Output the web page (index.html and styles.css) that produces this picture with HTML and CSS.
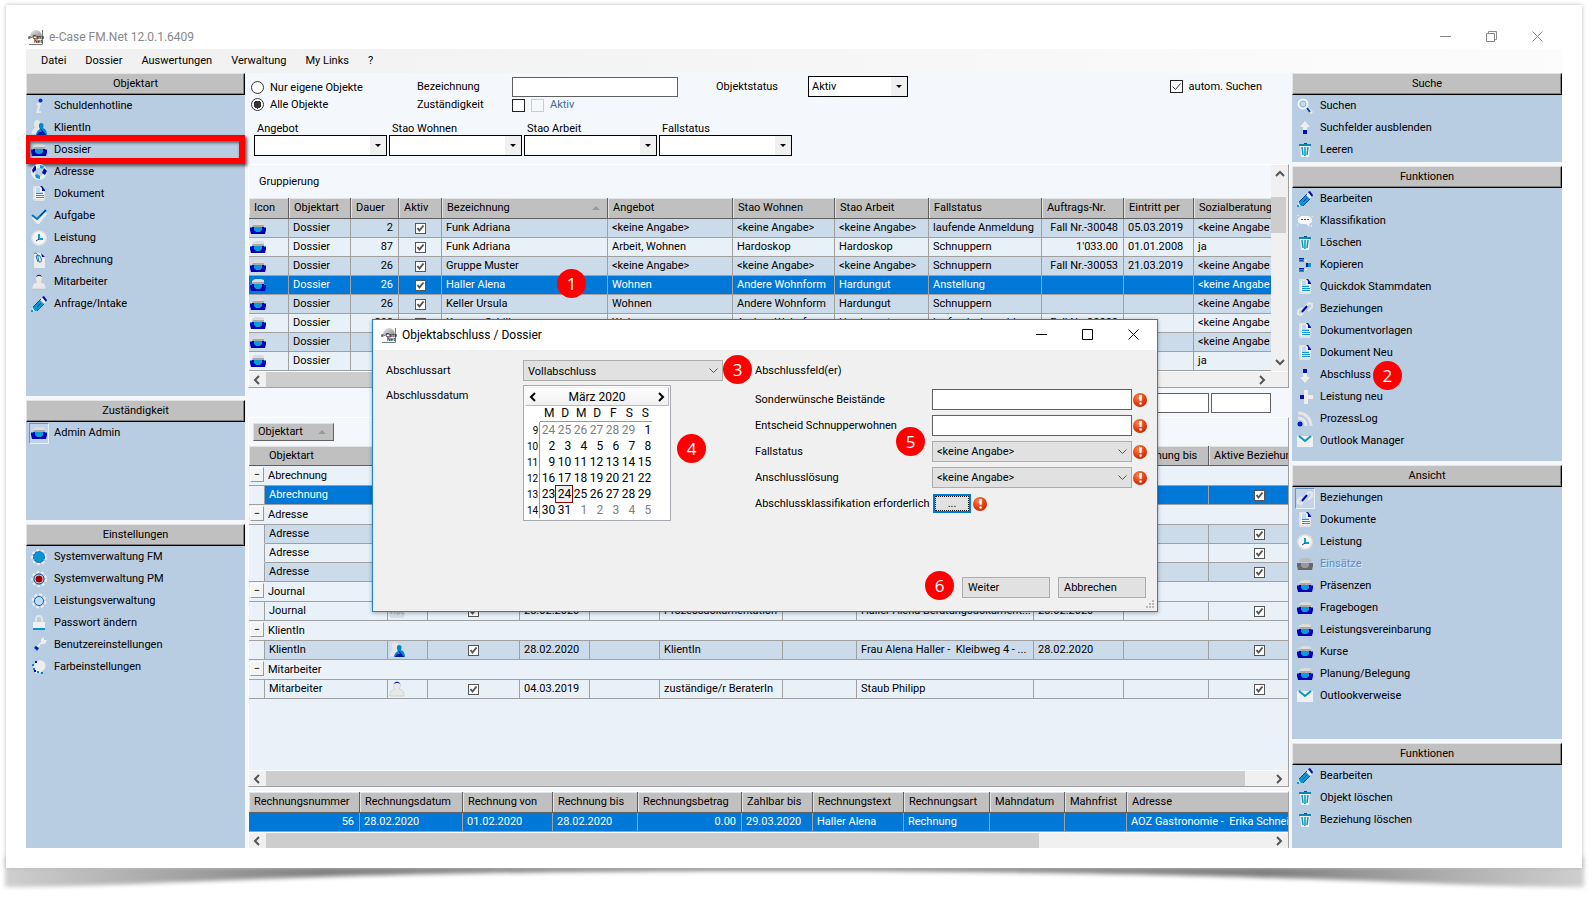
FILE: index.html
```html
<!DOCTYPE html>
<html lang="de">
<head>
<meta charset="utf-8">
<title>e-Case FM.Net 12.0.1.6409</title>
<link rel="stylesheet" href="styles.css">
</head>
<body>
<svg class="sprite" aria-hidden="true">
<defs><radialGradient id="ball" cx=".4" cy=".3" r=".8"><stop offset="0" stop-color="#ff8a55"/><stop offset=".5" stop-color="#ee4312"/><stop offset="1" stop-color="#b32600"/></radialGradient>
<linearGradient id="dome" x1="0" y1="0" x2="1" y2="1"><stop offset="0" stop-color="#eee"/><stop offset="1" stop-color="#888"/></linearGradient></defs>
<symbol id="logo" viewBox="0 0 16 16"><path d="M2 8a6 7 0 0 1 12 0z" fill="url(#dome)"/><path d="M14.5 1v14.5H1" stroke="#777" fill="none"/><text x="0" y="9.500" font-family="Liberation Sans" font-size="5" font-weight="bold" fill="#222">e-Case</text><text x="6" y="14" font-family="Liberation Sans" font-size="5" font-weight="bold" fill="#222">Net</text><path d="M8 9l3-1-1 2z" fill="#c33"/></symbol>
<symbol id="info" viewBox="0 0 16 16"><path d="M6 5h4l-2 8h2v2H5l2-8H5z" fill="#e4e8ee"/><circle cx="9.500" cy="2.500" r="2" fill="#0030c8"/></symbol>
<symbol id="client" viewBox="0 0 16 16"><path d="M6 0c3 0 4 3 2 6 1 2 3 3 3 8H1c-1-3 1-5 3-6C2 5 3 0 6 0z" fill="#e6e6e6"/><path d="M10 3c3 0 3 3 2 5 3 1 4 4 4 7H5c0-3 2-5 4-6-2-3-1-6 1-6z" fill="#0088cc"/><path d="M9 8l3 3 3 4H6l2-3h3z" fill="#0010b0"/></symbol>
<symbol id="dossier" viewBox="0 0 16 16"><path d="M2 6V4l3-2h6l3 1v3z" fill="#dcdcdc"/><path d="M3 5h11v2H2z" fill="#aaa"/><path d="M0 7h16v3l-1 4H1L0 10z" fill="#0000b8"/><path d="M4 7h8v3l-2 2H6l-2-2z" fill="#0a9ad4"/><path d="M0 7h2v1H0zM14 7h2v1h-2z" fill="#0a9ad4"/></symbol>
<symbol id="dossier-off" viewBox="0 0 16 16"><path d="M2 6V4l3-2h6l3 1v3z" fill="#bbb"/><path d="M0 7h16v3l-1 4H1L0 10z" fill="#686868"/><path d="M4 7h8v3l-2 2H6l-2-2z" fill="#999"/></symbol>
<symbol id="globe" viewBox="0 0 16 16"><circle cx="8" cy="8" r="6" fill="none" stroke="#ececec" stroke-width="4"/><path d="M4 1l-3 5 1 3 3-3V3z" fill="#0010a8"/><path d="M4 11l1 3 4 1v-3l-3-2z" fill="#0a9ad4"/><path d="M13 4l3 3-2 4-3-2z" fill="#0010a8"/><path d="M9 1l4 1-1 3-3-1z" fill="#0a9ad4"/></symbol>
<symbol id="doc" viewBox="0 0 16 16"><path d="M2 0h8l4 4v9l-1 2H3l-1-2z" fill="#e2e2e2"/><path d="M4 2h6v3h3v8H4z" fill="#f6f6f6"/><path d="M5 2h4v4h3v1H5z" fill="#b6daf6"/><path d="M9 0h2l3 4v1h-3V2z" fill="#0010a8"/><path d="M5 7.500h7M5 9.500h8M5 11.500h8" stroke="#0a9cd0"/></symbol>
<symbol id="check" viewBox="0 0 16 16"><path d="M2 9l5 6 8-10" fill="none" stroke="#ececec" stroke-width="3"/><path d="M1 7l5 4 9-9" fill="none" stroke="#0078c8" stroke-width="2"/><path d="M9 8l6-6" stroke="#0010a8"/></symbol>
<symbol id="clock" viewBox="0 0 16 16"><circle cx="8" cy="8" r="8" fill="#ddd"/><circle cx="8" cy="8" r="6.500" fill="#f5f5f5"/><path d="M8 4v5h4" fill="none" stroke="#0aa0cc" stroke-width="2"/><path d="M5 11l3-2" stroke="#246" /></symbol>
<symbol id="clip" viewBox="0 0 16 16"><path d="M3 1h8l3 4v11H3z" fill="#ececec"/><path d="M10 1l4 4h-3z" fill="#0010a8"/><path d="M3 2c2-2 4 0 4 3l1 5c2 1 3-1 2-4L8 3 5 4l2 6" fill="none" stroke="#0a80b8"/></symbol>
<symbol id="person" viewBox="0 0 16 16"><path d="M5 2c1-2 5-2 6 0 1 3 0 4-1 6 3 1 5 2 5 7H1c0-5 2-6 5-7-2-2-2-4-1-6z" fill="#e8e8e8" stroke="#bbb" stroke-width=".5"/><path d="M5 3c1-3 5-3 6 0l-2-1H7z" fill="#0020a8"/></symbol>
<symbol id="pencil" viewBox="0 0 16 16"><path d="M2 11L10 3l4 4-8 8-3 0z" fill="#0a94d0"/><path d="M9 4l2-2 4 4-2 2z" fill="#f0f0f0"/><path d="M11 1l2-1 3 4-1 2z" fill="#0010b0"/><path d="M2 11l8-8M6 11l4-4M6 15l7-7" stroke="#0048a0"/><path d="M1 12l3 3-2 0z" fill="#fff"/><path d="M0 14h2v2H0z" fill="#00a0d8"/></symbol>
<symbol id="gear" viewBox="0 0 16 16"><circle cx="8" cy="8" r="7" fill="none" stroke="#eee" stroke-width="2" stroke-dasharray="3 2"/><circle cx="8" cy="8" r="5.500" fill="#0a94d0" stroke="#0058b8" stroke-dasharray="2 1"/></symbol>
<symbol id="gear-red" viewBox="0 0 16 16"><circle cx="8" cy="8" r="7" fill="none" stroke="#eee" stroke-width="2" stroke-dasharray="3 2"/><circle cx="8" cy="8" r="5" fill="#e8e8e8" stroke="#00408c"/><circle cx="8" cy="8" r="3.500" fill="#a00000"/></symbol>
<symbol id="gear-ring" viewBox="0 0 16 16"><circle cx="8" cy="8" r="6.500" fill="none" stroke="#eee" stroke-width="2" stroke-dasharray="3 2"/><circle cx="8" cy="8" r="4.500" fill="#c8daf0" stroke="#0070b8"/></symbol>
<symbol id="lock" viewBox="0 0 16 16"><path d="M5 8V4a3 3 0 0 1 6 0v4" fill="none" stroke="#e4e4e4" stroke-width="2"/><path d="M2 7h12v6H2z" fill="#f0f0f0"/><path d="M2 13h12v2H2z" fill="#0a94d0"/></symbol>
<symbol id="wrench" viewBox="0 0 16 16"><path d="M6 9l4-4V2l3-2v3l3 0-2 4-4 0-3 4z" fill="#eee"/><path d="M3 11l2-2 3 2-2 3z" fill="#0a64c0"/><path d="M4 10l3 2" stroke="#0010a8" stroke-width="2"/></symbol>
<symbol id="palette" viewBox="0 0 16 16"><path d="M6 2c6-3 10 3 8 7s-9 8-11 3S4 6 6 2z" fill="#eee"/><path d="M1 5h2v2H1zM2 9h2v2H2zM6 12h2v2H6zM10 13h2v2h-2z" fill="#0a80c0"/><path d="M4 2h2v2H4zM3 11h2v2H3z" fill="#0010a8"/></symbol>
<symbol id="search" viewBox="0 0 16 16"><circle cx="6" cy="6" r="4.500" fill="#c4dcf0" stroke="#f4f4f4" stroke-width="2"/><circle cx="6" cy="6" r="3" fill="none" stroke="#88b8d0"/><path d="M10 10l5 5" stroke="#eee" stroke-width="3"/><path d="M10 10l3 4" stroke="#0040b0" stroke-width="2"/></symbol>
<symbol id="up" viewBox="0 0 16 16"><path d="M8 1l5 6h-3v3H6V7H3z" fill="#eee"/><path d="M6 10h4v4H6z" fill="#0010b0"/></symbol>
<symbol id="down" viewBox="0 0 16 16"><path d="M6 2h4v4H6z" fill="#0010b0"/><path d="M6 6h4v4h3l-5 6-5-6h3z" fill="#eee"/></symbol>
<symbol id="plus" viewBox="0 0 16 16"><path d="M7 1h4v5h5v4h-5v5H7z" fill="#eee"/><path d="M2 6h5v4H2z" fill="#b4d4f4"/><path d="M3 6h4v4H3z" fill="#0010b0"/></symbol>
<symbol id="trash" viewBox="0 0 16 16"><path d="M3 4h10l-1 11H4z" fill="#e8f2f4"/><path d="M2 2h12v2H2z" fill="#0a88b0"/><path d="M7 1h3v1H7z" fill="#005090"/><path d="M5 5l1 8M8 5v9M11 5l-1 8" stroke="#0a98b8" stroke-width="1.500" fill="none"/></symbol>
<symbol id="bubble" viewBox="0 0 16 16"><path d="M4 3h8l3 3v3l-3 2 1 3-4-3H4L1 9V6z" fill="#f8f8f8"/><path d="M4 6h2v1H4zM7 6h2v1H7zM10 6h2v1h-2z" fill="#357"/><path d="M1 2v1M0 12h1M14 13h1M15 3v1" stroke="#fff"/></symbol>
<symbol id="copy" viewBox="0 0 16 16"><path d="M2 1h5v4H2zM2 11h5v4H2zM9 6h5v4H9z" fill="#0a98c8"/><path d="M2 1h5v1H2zM2 11h5v1H2zM9 6h2v4H9z" fill="#0020a0"/><path d="M3 3h3v1H3zM3 13h3v1H3z" fill="#006090"/><path d="M8 3h2v1H8zM8 12h2v1H8z" fill="#eee"/></symbol>
<symbol id="link" viewBox="0 0 16 16"><path d="M8 6l4-4 3 1v3l-4 4M8 9l-4 5-3-1v-3l4-3" fill="none" stroke="#e8e8e8" stroke-width="2"/><path d="M5 11l5-6" stroke="#0010b0" stroke-width="2"/></symbol>
<symbol id="rss" viewBox="0 0 16 16"><path d="M1 2c8 0 13 6 13 13M1 7c5 0 8 3 8 8" fill="none" stroke="#e6e6e6" stroke-width="3"/><circle cx="3" cy="13" r="2.500" fill="#0020b8"/></symbol>
<symbol id="mail" viewBox="0 0 16 16"><path d="M0 3h16v11H0z" fill="#f0f0f0"/><path d="M2 3l6 5 6-5" fill="none" stroke="#0a98b8" stroke-width="2"/></symbol>
<symbol id="abc" viewBox="0 0 16 16"><path d="M0 3l3-1h10l3 2v9l-2 2H2l-2-2z" fill="#ddd"/><path d="M2 11l2-5 2 5M8 6v5h2l1-2-2-1 1-2zM15 7h-2v4h2" fill="none" stroke="#9ab8d4"/></symbol>
<symbol id="alert" viewBox="0 0 14 14"><circle cx="7" cy="7" r="7" fill="url(#ball)"/><path d="M6 2h3l-.5 6h-2z" fill="#fff"/><circle cx="7.500" cy="10.500" r="1.300" fill="#fff"/></symbol>
<symbol id="cl" viewBox="0 0 8 10"><path d="M6 1L2 5l4 4" fill="none" stroke="currentColor" stroke-width="2"/></symbol>
<symbol id="cr" viewBox="0 0 8 10"><path d="M2 1l4 4-4 4" fill="none" stroke="currentColor" stroke-width="2"/></symbol>
<symbol id="cu" viewBox="0 0 10 8"><path d="M1 6l4-4 4 4" fill="none" stroke="currentColor" stroke-width="2"/></symbol>
<symbol id="cd" viewBox="0 0 10 8"><path d="M1 2l4 4 4-4" fill="none" stroke="currentColor" stroke-width="2"/></symbol>
</svg>

<div class="page">
<svg class="lift" viewBox="0 0 1596 40" preserveAspectRatio="none" aria-hidden="true"><defs><linearGradient id="sh"><stop offset="0" stop-color="#cfcfcf"/><stop offset=".08" stop-color="#b0b0b0"/><stop offset=".2" stop-color="#808080"/><stop offset=".5" stop-color="#929292"/><stop offset=".8" stop-color="#808080"/><stop offset=".92" stop-color="#b0b0b0"/><stop offset="1" stop-color="#cfcfcf"/></linearGradient></defs><path d="M5 0V30C160 30 300 13 800 14S1430 30 1584 30V0z" fill="url(#sh)"/></svg>
<div class="paper">
<header class="titlebar"><svg class="ic"><use href="#logo"/></svg><span>e-Case FM.Net 12.0.1.6409</span>
<div class="winbtns"><button aria-label="Minimieren"><svg viewBox="0 0 11 11"><path d="M0 5.500h11"/></svg></button><button aria-label="Wiederherstellen"><svg viewBox="0 0 11 11"><path d="M.5 2.500h8v8h-8zM2.500 2.500v-2h8v8h-2"/></svg></button><button aria-label="Schliessen"><svg viewBox="0 0 11 11"><path d="M.5.5l10 10M10.500.5l-10 10"/></svg></button></div></header>
<nav class="menubar"><a href="#">Datei</a><a href="#">Dossier</a><a href="#">Auswertungen</a><a href="#">Verwaltung</a><a href="#">My Links</a><a href="#">?</a></nav>
<main class="work">
<aside class="side left">
<section class="panel"><h2>Objektart</h2>
<a href="#"><i><svg class="ic"><use href="#info"/></svg></i>Schuldenhotline</a>
<a href="#"><i><svg class="ic"><use href="#client"/></svg></i>KlientIn</a>
<a href="#" class="marked"><i><svg class="ic"><use href="#dossier"/></svg></i>Dossier</a>
<a href="#"><i><svg class="ic"><use href="#globe"/></svg></i>Adresse</a>
<a href="#"><i><svg class="ic"><use href="#doc"/></svg></i>Dokument</a>
<a href="#"><i><svg class="ic"><use href="#check"/></svg></i>Aufgabe</a>
<a href="#"><i><svg class="ic"><use href="#clock"/></svg></i>Leistung</a>
<a href="#"><i><svg class="ic"><use href="#clip"/></svg></i>Abrechnung</a>
<a href="#"><i><svg class="ic"><use href="#person"/></svg></i>Mitarbeiter</a>
<a href="#"><i><svg class="ic"><use href="#pencil"/></svg></i>Anfrage/Intake</a></section>
<section class="panel"><h2>Zuständigkeit</h2>
<a href="#" class="on"><i><svg class="ic"><use href="#dossier"/></svg></i>Admin Admin</a></section>
<section class="panel"><h2>Einstellungen</h2>
<a href="#"><i><svg class="ic"><use href="#gear"/></svg></i>Systemverwaltung FM</a>
<a href="#"><i><svg class="ic"><use href="#gear-red"/></svg></i>Systemverwaltung PM</a>
<a href="#"><i><svg class="ic"><use href="#gear-ring"/></svg></i>Leistungsverwaltung</a>
<a href="#"><i><svg class="ic"><use href="#lock"/></svg></i>Passwort ändern</a>
<a href="#"><i><svg class="ic"><use href="#wrench"/></svg></i>Benutzereinstellungen</a>
<a href="#"><i><svg class="ic"><use href="#palette"/></svg></i>Farbeinstellungen</a></section>
</aside>

<div class="center">
<form class="filters">
<div class="frow">
<div class="radios"><label><input type="radio" name="own">Nur eigene Objekte</label><label><input type="radio" name="own" checked>Alle Objekte</label></div>
<label for="bez">Bezeichnung</label><input id="bez" type="text" class="txt">
<label for="ost" class="c5">Objektstatus</label><select id="ost" class="combo c6"><option>Aktiv</option></select>
<label class="auto"><input type="checkbox" class="box" checked>autom. Suchen</label>
<label for="zus" class="r2">Zuständigkeit</label><div class="r2 two"><input id="zus" type="checkbox" class="box"><label class="dim"><input type="checkbox" class="box" disabled>Aktiv</label></div>
</div>
<div class="combos">
<label>Angebot<select class="combo"><option></option></select></label>
<label>Stao Wohnen<select class="combo"><option></option></select></label>
<label>Stao Arbeit<select class="combo"><option></option></select></label>
<label>Fallstatus<select class="combo"><option></option></select></label>
</div>
</form>

<section class="gridbox top">
<div class="clip">
<div class="groupbar">Gruppierung</div>
<table class="grid">
<colgroup><col class="w40"><col class="w62"><col class="w48"><col class="w43"><col class="w166"><col class="w125"><col class="w102"><col class="w94"><col class="w113"><col class="w82"><col class="w70"><col></colgroup>
<thead><tr><th>Icon</th><th>Objektart</th><th>Dauer</th><th>Aktiv</th><th class="sort">Bezeichnung</th><th>Angebot</th><th>Stao Wohnen</th><th>Stao Arbeit</th><th>Fallstatus</th><th>Auftrags-Nr.</th><th>Eintritt per</th><th>Sozialberatung</th></tr></thead>
<tbody>
<tr class="alt"><td class="pic"><svg class="ic"><use href="#dossier"/></svg></td><td>Dossier</td><td class="r">2</td><td class="c"><input type="checkbox" checked aria-label="Aktiv"></td><td>Funk Adriana</td><td>&lt;keine Angabe&gt;</td><td>&lt;keine Angabe&gt;</td><td>&lt;keine Angabe&gt;</td><td>laufende Anmeldung</td><td class="r">Fall Nr.-30048</td><td>05.03.2019</td><td>&lt;keine Angabe</td></tr>
<tr><td class="pic"><svg class="ic"><use href="#dossier"/></svg></td><td>Dossier</td><td class="r">87</td><td class="c"><input type="checkbox" checked aria-label="Aktiv"></td><td>Funk Adriana</td><td>Arbeit, Wohnen</td><td>Hardoskop</td><td>Hardoskop</td><td>Schnuppern</td><td class="r">1'033.00</td><td>01.01.2008</td><td>ja</td></tr>
<tr class="alt"><td class="pic"><svg class="ic"><use href="#dossier"/></svg></td><td>Dossier</td><td class="r">26</td><td class="c"><input type="checkbox" checked aria-label="Aktiv"></td><td>Gruppe Muster</td><td>&lt;keine Angabe&gt;</td><td>&lt;keine Angabe&gt;</td><td>&lt;keine Angabe&gt;</td><td>Schnuppern</td><td class="r">Fall Nr.-30053</td><td>21.03.2019</td><td>&lt;keine Angabe</td></tr>
<tr class="sel"><td class="pic"><svg class="ic"><use href="#dossier"/></svg></td><td>Dossier</td><td class="r">26</td><td class="c"><input type="checkbox" checked aria-label="Aktiv"></td><td>Haller Alena</td><td>Wohnen</td><td>Andere Wohnform</td><td>Hardungut</td><td>Anstellung</td><td></td><td></td><td>&lt;keine Angabe</td></tr>
<tr class="alt"><td class="pic"><svg class="ic"><use href="#dossier"/></svg></td><td>Dossier</td><td class="r">26</td><td class="c"><input type="checkbox" checked aria-label="Aktiv"></td><td>Keller Ursula</td><td>Wohnen</td><td>Andere Wohnform</td><td>Hardungut</td><td>Schnuppern</td><td></td><td></td><td>&lt;keine Angabe</td></tr>
<tr><td class="pic"><svg class="ic"><use href="#dossier"/></svg></td><td>Dossier</td><td class="r">298</td><td class="c"><input type="checkbox" checked aria-label="Aktiv"></td><td>Kunzen Sybille</td><td>Wohnen</td><td>Andere Wohnform</td><td>Hardungut</td><td>laufende Anmeldung</td><td class="r">Fall Nr.-30088</td><td></td><td>&lt;keine Angabe</td></tr>
<tr class="alt"><td class="pic"><svg class="ic"><use href="#dossier"/></svg></td><td>Dossier</td><td></td><td></td><td></td><td></td><td></td><td></td><td></td><td></td><td></td><td>&lt;keine Angabe</td></tr>
<tr><td class="pic"><svg class="ic"><use href="#dossier"/></svg></td><td>Dossier</td><td></td><td></td><td></td><td></td><td></td><td></td><td></td><td></td><td></td><td>ja</td></tr>
</tbody></table>
</div>
<div class="vscroll"><svg class="chev h"><use href="#cu"/></svg><div class="vthumb"></div><svg class="chev h"><use href="#cd"/></svg></div>
<div class="hscroll"><svg class="chev"><use href="#cl"/></svg><div class="track"><div style="width:80%"></div></div><svg class="chev"><use href="#cr"/></svg></div>
</section>

<div class="sums"><input type="text" class="txt" aria-label="Summe 1"><input type="text" class="txt" aria-label="Summe 2"></div>

<section class="gridbox mid">
<div class="clip">
<div class="groupbar small"><button class="chip">Objektart<span class="tri"></span></button></div>
<table class="grid">
<colgroup><col class="w16"><col class="w123"><col class="w40"><col class="w92"><col class="w70"><col class="w70"><col class="w123"><col class="w74"><col class="w177"><col class="w90"><col class="w85"><col></colgroup>
<thead><tr><th colspan="2" class="ind">Objektart</th><th></th><th></th><th></th><th></th><th></th><th></th><th></th><th></th><th>Beziehung bis</th><th>Aktive Beziehun</th></tr></thead>
<tbody>
<tr class="grp"><td colspan="12"><button>−</button>Abrechnung</td></tr>
<tr class="sel"><td class="gut"></td><td>Abrechnung</td><td></td><td></td><td></td><td></td><td></td><td></td><td></td><td></td><td></td><td class="k"><input type="checkbox" checked aria-label="Aktive Beziehung"></td></tr>
<tr class="grp"><td colspan="12"><button>−</button>Adresse</td></tr>
<tr class="alt"><td class="gut"></td><td>Adresse</td><td></td><td></td><td></td><td></td><td></td><td></td><td></td><td></td><td></td><td class="k"><input type="checkbox" checked aria-label="Aktive Beziehung"></td></tr>
<tr><td class="gut"></td><td>Adresse</td><td></td><td></td><td></td><td></td><td></td><td></td><td></td><td></td><td></td><td class="k"><input type="checkbox" checked aria-label="Aktive Beziehung"></td></tr>
<tr class="alt"><td class="gut"></td><td>Adresse</td><td></td><td></td><td></td><td></td><td></td><td></td><td></td><td></td><td></td><td class="k"><input type="checkbox" checked aria-label="Aktive Beziehung"></td></tr>
<tr class="grp"><td colspan="12"><button>−</button>Journal</td></tr>
<tr><td class="gut"></td><td>Journal</td><td class="pic"><svg class="ic"><use href="#abc"/></svg></td><td class="c"><input type="checkbox" checked aria-label="Aktiv"></td><td>28.02.2020</td><td></td><td>Prozessdokumentation</td><td></td><td>Haller Alena Beratungsdokument...</td><td>28.02.2020</td><td></td><td class="k"><input type="checkbox" checked aria-label="Aktive Beziehung"></td></tr>
<tr class="grp"><td colspan="12"><button>−</button>KlientIn</td></tr>
<tr class="alt"><td class="gut"></td><td>KlientIn</td><td class="pic"><svg class="ic"><use href="#client"/></svg></td><td class="c"><input type="checkbox" checked aria-label="Aktiv"></td><td>28.02.2020</td><td></td><td>KlientIn</td><td></td><td>Frau Alena Haller -&nbsp; Kleibweg 4 - ...</td><td>28.02.2020</td><td></td><td class="k"><input type="checkbox" checked aria-label="Aktive Beziehung"></td></tr>
<tr class="grp"><td colspan="12"><button>−</button>Mitarbeiter</td></tr>
<tr><td class="gut"></td><td>Mitarbeiter</td><td class="pic"><svg class="ic"><use href="#person"/></svg></td><td class="c"><input type="checkbox" checked aria-label="Aktiv"></td><td>04.03.2019</td><td></td><td>zuständige/r BeraterIn</td><td></td><td>Staub Philipp</td><td></td><td></td><td class="k"><input type="checkbox" checked aria-label="Aktive Beziehung"></td></tr>
</tbody></table>
</div>
<div class="hscroll"><svg class="chev"><use href="#cl"/></svg><div class="track"><div style="width:97.5%"></div></div><svg class="chev"><use href="#cr"/></svg></div>
</section>

<section class="gridbox bot">
<div class="clip">
<table class="grid">
<colgroup><col class="w111"><col class="w103"><col class="w90"><col class="w85"><col class="w104"><col class="w71"><col class="w91"><col class="w86"><col class="w75"><col class="w62"><col></colgroup>
<thead><tr><th>Rechnungsnummer</th><th>Rechnungsdatum</th><th>Rechnung von</th><th>Rechnung bis</th><th>Rechnungsbetrag</th><th>Zahlbar bis</th><th>Rechnungstext</th><th>Rechnungsart</th><th>Mahndatum</th><th>Mahnfrist</th><th>Adresse</th></tr></thead>
<tbody><tr class="sel"><td class="r">56</td><td>28.02.2020</td><td>01.02.2020</td><td>28.02.2020</td><td class="r">0.00</td><td>29.03.2020</td><td>Haller Alena</td><td>Rechnung</td><td></td><td></td><td>AOZ Gastronomie -&nbsp; Erika Schnei</td></tr></tbody></table>
</div>
<div class="hscroll"><svg class="chev"><use href="#cl"/></svg><div class="track"><div style="width:77%"></div></div><svg class="chev"><use href="#cr"/></svg></div>
</section>
</div>

<aside class="side right">
<section class="panel"><h2>Suche</h2>
<a href="#"><i><svg class="ic"><use href="#search"/></svg></i>Suchen</a>
<a href="#"><i><svg class="ic"><use href="#up"/></svg></i>Suchfelder ausblenden</a>
<a href="#"><i><svg class="ic"><use href="#trash"/></svg></i>Leeren</a></section>
<section class="panel"><h2>Funktionen</h2>
<a href="#"><i><svg class="ic"><use href="#pencil"/></svg></i>Bearbeiten</a>
<a href="#"><i><svg class="ic"><use href="#bubble"/></svg></i>Klassifikation</a>
<a href="#"><i><svg class="ic"><use href="#trash"/></svg></i>Löschen</a>
<a href="#"><i><svg class="ic"><use href="#copy"/></svg></i>Kopieren</a>
<a href="#"><i><svg class="ic"><use href="#doc"/></svg></i>Quickdok Stammdaten</a>
<a href="#"><i><svg class="ic"><use href="#link"/></svg></i>Beziehungen</a>
<a href="#"><i><svg class="ic"><use href="#doc"/></svg></i>Dokumentvorlagen</a>
<a href="#"><i><svg class="ic"><use href="#doc"/></svg></i>Dokument Neu</a>
<a href="#"><i><svg class="ic"><use href="#down"/></svg></i>Abschluss<b class="num inline">2</b></a>
<a href="#"><i><svg class="ic"><use href="#plus"/></svg></i>Leistung neu</a>
<a href="#"><i><svg class="ic"><use href="#rss"/></svg></i>ProzessLog</a>
<a href="#"><i><svg class="ic"><use href="#mail"/></svg></i>Outlook Manager</a></section>
<section class="panel"><h2>Ansicht</h2>
<a href="#" class="on"><i><svg class="ic"><use href="#link"/></svg></i>Beziehungen</a>
<a href="#"><i><svg class="ic"><use href="#doc"/></svg></i>Dokumente</a>
<a href="#"><i><svg class="ic"><use href="#clock"/></svg></i>Leistung</a>
<a href="#" class="off"><i><svg class="ic"><use href="#dossier-off"/></svg></i>Einsätze</a>
<a href="#"><i><svg class="ic"><use href="#dossier"/></svg></i>Präsenzen</a>
<a href="#"><i><svg class="ic"><use href="#dossier"/></svg></i>Fragebogen</a>
<a href="#"><i><svg class="ic"><use href="#dossier"/></svg></i>Leistungsvereinbarung</a>
<a href="#"><i><svg class="ic"><use href="#dossier"/></svg></i>Kurse</a>
<a href="#"><i><svg class="ic"><use href="#dossier"/></svg></i>Planung/Belegung</a>
<a href="#"><i><svg class="ic"><use href="#mail"/></svg></i>Outlookverweise</a></section>
<section class="panel"><h2>Funktionen</h2>
<a href="#"><i><svg class="ic"><use href="#pencil"/></svg></i>Bearbeiten</a>
<a href="#"><i><svg class="ic"><use href="#trash"/></svg></i>Objekt löschen</a>
<a href="#"><i><svg class="ic"><use href="#trash"/></svg></i>Beziehung löschen</a></section>
</aside>
</main>

<b class="num n1">1</b>

<div class="dialog" role="dialog" aria-labelledby="dt">
<header><svg class="ic"><use href="#logo"/></svg><span id="dt">Objektabschluss / Dossier</span>
<div class="winbtns"><button aria-label="Minimieren"><svg viewBox="0 0 11 11"><path d="M0 5.500h11"/></svg></button><button aria-label="Maximieren"><svg viewBox="0 0 11 11"><path d="M.5.5h10v10H.5z"/></svg></button><button aria-label="Schliessen"><svg viewBox="0 0 11 11"><path d="M.5.5l10 10M10.500.5l-10 10"/></svg></button></div></header>
<form class="dbody">
<div class="dleft">
<label for="art">Abschlussart</label><select id="art" class="flat"><option>Vollabschluss</option></select>
<span class="lbl">Abschlussdatum</span>
<div class="cal"><div class="calhead"><button type="button" aria-label="Zurück"><svg class="chev"><use href="#cl"/></svg></button><span>März 2020</span><button type="button" aria-label="Weiter"><svg class="chev"><use href="#cr"/></svg></button></div>
<table><thead><tr><th></th><th>M</th><th>D</th><th>M</th><th>D</th><th>F</th><th>S</th><th>S</th></tr></thead><tbody>
<tr><th>9</th><td class="o">24</td><td class="o">25</td><td class="o">26</td><td class="o">27</td><td class="o">28</td><td class="o">29</td><td>1</td></tr>
<tr><th>10</th><td>2</td><td>3</td><td>4</td><td>5</td><td>6</td><td>7</td><td>8</td></tr>
<tr><th>11</th><td>9</td><td>10</td><td>11</td><td>12</td><td>13</td><td>14</td><td>15</td></tr>
<tr><th>12</th><td>16</td><td>17</td><td>18</td><td>19</td><td>20</td><td>21</td><td>22</td></tr>
<tr><th>13</th><td>23</td><td class="today">24</td><td>25</td><td>26</td><td>27</td><td>28</td><td>29</td></tr>
<tr><th>14</th><td>30</td><td>31</td><td class="o">1</td><td class="o">2</td><td class="o">3</td><td class="o">4</td><td class="o">5</td></tr>
</tbody></table></div>
</div>
<div class="dright">
<span class="full">Abschlussfeld(er)</span>
<label for="f1">Sonderwünsche Beistände</label><input id="f1" type="text" class="txt"><svg class="al"><use href="#alert"/></svg>
<label for="f2">Entscheid Schnupperwohnen</label><input id="f2" type="text" class="txt"><svg class="al"><use href="#alert"/></svg>
<label for="f3">Fallstatus</label><select id="f3" class="flat"><option>&lt;keine Angabe&gt;</option></select><svg class="al"><use href="#alert"/></svg>
<label for="f4">Anschlusslösung</label><select id="f4" class="flat"><option>&lt;keine Angabe&gt;</option></select><svg class="al"><use href="#alert"/></svg>
<label for="f5">Abschlussklassifikation erforderlich</label><div class="dots"><button id="f5" type="button">...</button><svg class="al"><use href="#alert"/></svg></div>
</div>
<div class="dfoot"><button type="button">Weiter</button><button type="button">Abbrechen</button></div>
</form>
<svg class="grip" viewBox="0 0 9 9"><path d="M6 0h2v2H6zM3 3h2v2H3zM6 3h2v2H6zM0 6h2v2H0zM3 6h2v2H3zM6 6h2v2H6z" fill="#bbb"/></svg>
<b class="num n3">3</b><b class="num n4">4</b><b class="num n5">5</b><b class="num n6">6</b>
</div>
</div>
</div>
</body>
</html>
```

FILE: styles.css
```css
:root {
  --ui: Roboto, "Liberation Sans", sans-serif;
  --line: #a0a0a0;
  --sky: #b8cce2;
  --pale: #f4f8fc;
  --blue: #0078d7;
}
* { box-sizing: border-box; }
body { margin: 0; background: #fff; font: 11px/16px var(--ui); color: #000; }
a { color: inherit; text-decoration: none; }
button, input, select { font: inherit; color: inherit; margin: 0; padding: 0; border-radius: 0; }
button { border: 0; background: none; }
.sprite { position: absolute; width: 0; height: 0; }
.ic { width: 16px; height: 16px; flex: none; display: block; }

.page { position: relative; min-height: 100vh; padding: 5px 14px 29px 6px; display: flex; overflow: hidden; }
.lift { position: absolute; left: 0; bottom: 0; width: 100%; height: 40px; filter: blur(2px); }
.paper { position: relative; flex: 1; min-width: 0; background: #fff; box-shadow: 0 0 4px #bbb; padding: 0 20px 20px 20px; display: flex; flex-direction: column; }

.titlebar { height: 44px; padding: 20px 0 0 2px; display: flex; align-items: center; gap: 5px; font: 12px/16px var(--ui); color: #888; }
.winbtns { margin-left: auto; display: flex; gap: 35px; padding-bottom: 2px; }
.winbtns button { width: 11px; height: 11px; display: block; }
.winbtns svg { width: 11px; height: 11px; display: block; fill: none; stroke: currentColor; }
.titlebar .winbtns { padding-right: 19px; }

.menubar { height: 24px; display: flex; align-items: center; gap: 19px; padding-left: 15px; background: linear-gradient(90deg, #f0f0f0, #fcfcfc); }

.work { flex: 1; display: grid; grid-template-columns: 219px minmax(0, 1fr) 270px; gap: 3px; background: var(--pale); }
.side { display: grid; gap: 4px; background: var(--pale); }
.left { grid-template-rows: 323fr 120fr 324fr; }
.right { grid-template-rows: 89fr 295fr 274fr 105fr; }
.panel { background: var(--sky); min-height: 0; }
.panel h2 { margin: 0; height: 22px; font: inherit; line-height: 20px; text-align: center; background: #c0c0c0; border: 1px solid #e4e4e4; border-right-color: #000; border-bottom-color: #000; box-shadow: inset -1px -1px 0 #808080; }
.panel a { position: relative; display: flex; align-items: center; gap: 5px; height: 22px; padding-left: 3px; }
.panel i { width: 20px; height: 21px; flex: none; display: flex; align-items: center; justify-content: center; border: 1px solid transparent; }
.panel .on i { border-color: #6a90c4 #e8f0f8 #e8f0f8 #6a90c4; background: #c4d4e8; }
.panel .off { color: #5b8cc8; text-shadow: 1px 1px 0 #dce8f4; }
.marked::after { content: ""; position: absolute; inset: -4px 0 -3px; border: 6px solid #f00; border-left-width: 4px; box-shadow: 2px 2px 3px #555, inset 1px 2px 3px #567; }

.center { display: flex; flex-direction: column; min-width: 0; }
.filters { padding: 3px 27px 8px 3px; }
.frow { display: grid; grid-template-columns: 166px 95px 166px 38px 92px 100px 1fr auto; grid-template-rows: 21px 16px; align-items: center; }
.radios { grid-row: 1 / 3; padding-top: 3px; }
.radios label { display: flex; align-items: center; gap: 6px; height: 17px; }
.radios input { appearance: none; width: 13px; height: 13px; border: 1px solid #333; border-radius: 50%; background: #fff; }
.radios input:checked { background: radial-gradient(#333 0 4px, #fff 4px); }
.txt { border: 1px solid #606060; background: #fff; height: 20px; padding: 0 3px; width: 100%; min-width: 0; }
.c5 { grid-column: 5; }
.c6 { grid-column: 6; }
.auto { grid-column: 8; display: flex; align-items: center; gap: 6px; }
.box { appearance: none; width: 13px; height: 13px; border: 1px solid #222; background: #fff; display: block; }
.box:checked { background: url("data:image/svg+xml,%3Csvg xmlns='http://www.w3.org/2000/svg' width='11' height='11'%3E%3Cpath d='M1.500 5.500l3 3 5-6' fill='none' stroke='%23333'/%3E%3C/svg%3E") #fff; }
.box:disabled { border-color: #ccc; background: #f6f9fc; }
.r2 { grid-row: 2; grid-column: 2; }
.two { grid-column: 3; display: flex; align-items: center; gap: 6px; }
.dim { display: flex; align-items: center; gap: 6px; color: #456a94; }
.combos { display: flex; gap: 2px; padding: 10px 0 0 3px; }
.combos label { width: 133px; line-height: 12px; text-indent: 3px; }
.combo { appearance: none; display: block; width: 100%; height: 21px; border: 1px solid #000; padding: 0 3px; background: url("data:image/svg+xml,%3Csvg xmlns='http://www.w3.org/2000/svg' width='16' height='19'%3E%3Cpath d='M0 0h16v19H0z' fill='%23f0f0f0'/%3E%3Cpath d='M5 8h6l-3 3z'/%3E%3C/svg%3E") right / 16px 19px no-repeat #fff; }

.gridbox { background: #eaf1f9; border: 1px solid #fff; border-right-color: var(--line); border-bottom-color: var(--line); min-width: 0; }
.gridbox .clip { overflow: hidden; min-width: 0; }
.top { display: grid; grid-template-columns: minmax(0, 1fr) 17px; background: var(--pale); }
.top .vscroll { grid-row: 1; grid-column: 2; }
.top .hscroll { grid-column: 1 / 3; padding-right: 17px; }
.groupbar { height: 33px; line-height: 34px; padding-left: 10px; background: var(--pale); }
.groupbar.small { height: 28px; padding: 5px 4px; }
.chip { display: flex; align-items: center; justify-content: space-between; width: 81px; height: 18px; line-height: 16px; padding: 0 7px 0 4px; background: #c0c0c0; border: 1px solid #e0e0e0; border-right-color: #606060; border-bottom-color: #606060; }
.tri, .sort::after { content: ""; display: block; border: 4px solid transparent; border-top: 0; border-bottom-color: #999; }
.sort::after { float: right; margin: 8px 3px; }

.grid { width: 100%; table-layout: fixed; border-spacing: 0; }
.grid th, .grid td { padding: 0 4px; height: 19px; line-height: 18px; font-weight: normal; text-align: left; white-space: nowrap; overflow: hidden; border-right: 1px solid var(--line); border-bottom: 1px solid var(--line); }
.grid th { height: 21px; line-height: 20px; padding-left: 5px; background: #c0c0c0; border-right-color: #606060; border-bottom-color: #606060; box-shadow: inset 1px 1px 0 #e4e4e4; }
.mid .grid th { height: 20px; line-height: 19px; }
.grid td { background: #e8f0f8; }
.grid .alt td { background: #ccdbea; }
.grid .sel td { background: var(--blue); color: #fff; }
.grid th:last-child, .grid td:last-child { border-right: 0; padding-right: 0; }
.grid .r { text-align: right; padding-right: 5px; }
.grid .c { text-align: center; padding: 0; }
.grid .k { padding-left: 45px; }
.grid .pic { padding: 0 1px; }
.grid .pic .ic { margin: 1px 0; }
.grid td input { appearance: none; display: inline-block; vertical-align: middle; width: 11px; height: 11px; border: 1px solid #555; background: url("data:image/svg+xml,%3Csvg xmlns='http://www.w3.org/2000/svg' width='9' height='9'%3E%3Cpath d='M1.500 4l2 2.500 4-5' fill='none' stroke='%23555' stroke-width='2'/%3E%3C/svg%3E") #fff; }
.grid .ind { padding-left: 20px; }
.grid .gut, .grid .alt .gut, .grid .sel .gut { background: #eaf1f9; border-bottom-color: #eaf1f9; }
.grid tr:has(+ .grp) .gut, .grid tr:last-child .gut { border-bottom-color: var(--line); }
.grid .grp td { height: 20px; line-height: 19px; padding-left: 1px; background: #eaf1f9; }
.grp button { width: 14px; height: 15px; line-height: 13px; margin: 1px 4px 0 0; display: inline-block; vertical-align: top; background: #f4f4f4; border: 1px solid #fff; border-right-color: #999; border-bottom-color: #999; color: #000; }
.w16 { width: 16px; } .w40 { width: 40px; } .w43 { width: 43px; } .w48 { width: 48px; } .w62 { width: 62px; }
.w70 { width: 70px; } .w71 { width: 71px; } .w74 { width: 74px; } .w75 { width: 75px; } .w82 { width: 82px; }
.w85 { width: 85px; } .w86 { width: 86px; } .w90 { width: 90px; } .w91 { width: 91px; } .w92 { width: 92px; }
.w94 { width: 94px; } .w102 { width: 102px; } .w103 { width: 103px; } .w104 { width: 104px; } .w111 { width: 111px; }
.w113 { width: 113px; } .w123 { width: 123px; } .w125 { width: 125px; } .w166 { width: 166px; } .w177 { width: 177px; }

.hscroll { height: 16px; display: flex; align-items: center; background: #f0f0f0; color: #555; border-top: 1px solid #fff; }
.chev { width: 8px; height: 10px; margin: 0 5px; flex: none; display: block; }
.chev.h { width: 10px; height: 8px; margin: 5px auto; }
.hscroll .chev:first-child { margin-left: 4px; }
.hscroll .track { flex: 1; align-self: stretch; }
.track div { height: 100%; background: #cdcdcd; }
.vscroll { display: flex; flex-direction: column; background: #f0f0f0; color: #555; }
.vthumb { height: 36px; margin: 14px 2px auto 0; background: #cdcdcd; }

.sums { height: 29px; padding: 5px 18px 0 0; display: flex; justify-content: flex-end; gap: 2px; }
.sums .txt { width: 60px; }
.mid { flex: 1; display: flex; flex-direction: column; }
.mid .hscroll { margin-top: auto; }
.bot { margin-top: 4px; border-bottom: 0; }

.num { position: absolute; width: 29px; height: 29px; border-radius: 50%; background: #f00; color: #fff; font: 17px/29px "Open Sans", sans-serif; text-align: center; text-shadow: none; }
.num.inline { position: relative; margin: -4px 0 -4px -3px; }
.n1 { left: 551px; top: 264px; }
.n3 { left: 350px; top: 35px; }
.n4 { left: 304px; top: 114px; }
.n5 { left: 523px; top: 107px; }
.n6 { left: 552px; top: 251px; }

.dialog { position: absolute; left: 366px; top: 314px; width: 786px; background: #f0f0f0; border: 1px solid #1883d7; box-shadow: 0 1px 4px rgba(0, 0, 0, .3); }
.dialog header { height: 30px; display: flex; align-items: center; gap: 5px; padding: 0 18px 0 8px; background: #fff; font-size: 12px; }
.dbody { display: grid; grid-template-columns: 369px 1fr; padding: 10px 13px 13px; }
.dleft { display: grid; grid-template-columns: 137px 200px; grid-template-rows: 21px auto; gap: 4px 0; align-content: start; align-items: start; line-height: 21px; }
.flat { appearance: none; width: 100%; height: 21px; border: 1px solid #adadad; padding: 0 4px; background: url("data:image/svg+xml,%3Csvg xmlns='http://www.w3.org/2000/svg' width='16' height='19'%3E%3Cpath d='M3.500 7.500l4 4 4-4' fill='none' stroke='%23555'/%3E%3C/svg%3E") right / 16px 19px no-repeat #e1e1e1; }
.cal { width: 148px; height: 136px; border: 1px solid #a8a8b0; background: #fff; font-size: 12px; line-height: 16px; padding: 1px; }
.calhead { height: 19px; display: flex; align-items: center; justify-content: space-between; background: linear-gradient(#fff, #f0f0f0); border: 1px solid #f4f4f4; border-right-color: #bbb; border-bottom-color: #bbb; }
.calhead .chev { margin: 0 3px; }
.cal table { border-spacing: 0; margin: 0 0 0 2px; }
.cal th, .cal td { width: 16px; min-width: 16px; height: 16px; padding: 0 1px 0 0; line-height: 15px; text-align: right; font-weight: normal; }
.cal thead th { text-align: center; border-bottom: 1px solid #999; padding-left: 3px; }
.cal tr th:first-child { width: 13px; min-width: 13px; font-size: 10px; border-bottom: 0; }
.cal tbody th { border-right: 1px solid #999; }
.cal .o { color: #808080; }
.cal .today { outline: 1px solid #900; background: #f0f0f0; }
.dright { display: grid; grid-template-columns: 177px 200px 15px; grid-template-rows: 24px; grid-auto-rows: 21px; row-gap: 5px; align-items: center; align-content: start; white-space: nowrap; }
.dright .txt { height: 21px; }
.full { grid-column: 1 / 4; align-self: start; line-height: 21px; }
.al { width: 14px; height: 14px; margin-left: 1px; display: block; }
.dots { display: flex; align-items: center; gap: 1px; padding-left: 1px; grid-column: 2 / 4; }
.dots button { width: 38px; height: 19px; line-height: 14px; border: 2px solid var(--blue); background: #e1e1e1; outline: 1px dotted #000; outline-offset: -3px; }
.dfoot { grid-column: 1 / 3; display: flex; justify-content: flex-end; gap: 8px; padding: 56px 1px 0 0; }
.dfoot button { width: 88px; height: 21px; border: 1px solid #adadad; background: #e1e1e1; text-align: left; padding-left: 5px; line-height: 19px; }
.grip { position: absolute; right: 2px; bottom: 2px; width: 9px; height: 9px; }
```
